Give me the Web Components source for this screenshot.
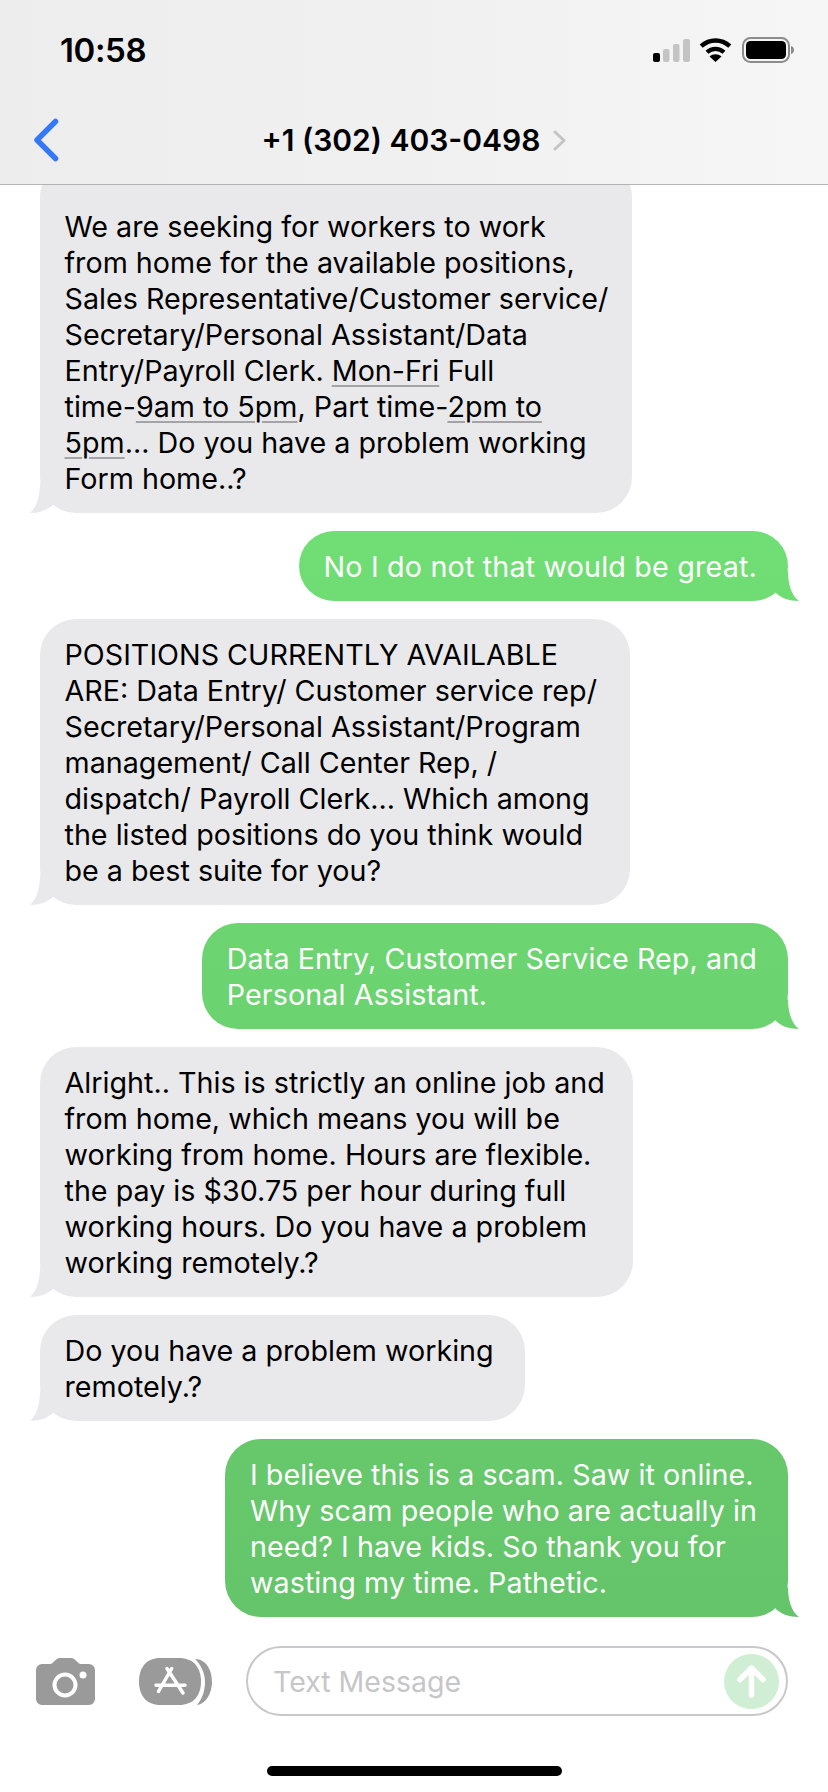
<!DOCTYPE html>
<html>
<head>
<meta charset="utf-8">
<title>Messages</title>
<style>
  html, body { margin: 0; padding: 0; background: #fff; }
  body { font-family: Inter, "Noto Sans", sans-serif; }
  .link { text-decoration: underline; text-decoration-color: #a3a3a8; text-decoration-thickness: 2px; text-underline-offset: 4px; }
</style>
</head>
<body>
<ios-screen>
  <ios-header slot="header" title="+1 (302) 403-0498" time="10:58"></ios-header>
  <msg-bubble from="them" style="--pt:48px;--pr:24px">We are seeking for workers to work<br>from home for the available positions,<br>Sales Representative/Customer service/<br>Secretary/Personal Assistant/Data<br>Entry/Payroll Clerk. <span class="link">Mon-Fri</span> Full<br>time-<span class="link">9am to 5pm</span>, Part time-<span class="link">2pm to</span><br><span class="link">5pm</span>... Do you have a problem working<br>Form home..?</msg-bubble>
  <msg-bubble from="me" style="letter-spacing:0.180px">No I do not that would be great.</msg-bubble>
  <msg-bubble from="them" style="--pr:33px">POSITIONS CURRENTLY AVAILABLE<br>ARE: Data Entry/ Customer service rep/<br>Secretary/Personal Assistant/Program<br>management/ Call Center Rep, /<br>dispatch/ Payroll Clerk... Which among<br>the listed positions do you think would<br>be a best suite for you?</msg-bubble>
  <msg-bubble from="me" style="letter-spacing:0.100px">Data Entry, Customer Service Rep, and<br>Personal Assistant.</msg-bubble>
  <msg-bubble from="them" style="--pr:28px">Alright.. This is strictly an online job and<br>from home, which means you will be<br>working from home. Hours are flexible.<br>the pay is $30.75 per hour during full<br>working hours. Do you have a problem<br>working remotely.?</msg-bubble>
  <msg-bubble from="them">Do you have a problem working<br>remotely.?</msg-bubble>
  <msg-bubble from="me" style="letter-spacing:0.060px">I believe this is a scam. Saw it online.<br>Why scam people who are actually in<br>need? I have kids. So thank you for<br>wasting my time. Pathetic.</msg-bubble>
  <compose-bar slot="footer" placeholder="Text Message"></compose-bar>
  <home-bar slot="footer"></home-bar>
</ios-screen>

<script>
class IosScreen extends HTMLElement {
  connectedCallback() {
    this.attachShadow({ mode: 'open' });
    this.shadowRoot.innerHTML = `
      <style>
        :host { display: flex; flex-direction: column; width: 828px; height: 1792px; overflow: hidden; background: #fff; }
        .list {
          flex: 1;
          min-height: 0;
          overflow: hidden;
          display: flex;
          flex-direction: column;
          justify-content: flex-end;
          gap: 18px;
          padding: 0 0 29px;
        }
      </style>
      <slot name="header"></slot>
      <div class="list"><slot></slot></div>
      <slot name="footer"></slot>
    `;
  }
}

class IosHeader extends HTMLElement {
  connectedCallback() {
    this.attachShadow({ mode: 'open' });
    this.shadowRoot.innerHTML = `
      <style>
        :host {
          display: block;
          height: 185px;
          box-sizing: border-box;
          background: linear-gradient(90deg, #ededee 0%, #f0f0f0 50%, #f6f6f6 100%);
          border-bottom: 1px solid #b4b4b6;
          color: #000;
        }
        .status { height: 100px; display: flex; align-items: center; justify-content: space-between; padding: 0 34px 0 60px; }
        .time { font-size: 33px; font-weight: 600; letter-spacing: -0.4px; }
        .icons { display: flex; align-items: center; }
        .icons svg { display: block; }
        .nav { height: 80px; display: grid; grid-template-columns: 1fr auto 1fr; align-items: center; }
        .back { padding-left: 33px; display: flex; }
        .title { display: flex; align-items: center; gap: 13px; font-size: 30px; font-weight: 600; letter-spacing: 0; }
      </style>
      <div class="status">
        <span class="time">${this.getAttribute('time')}</span>
        <div class="icons">
          <svg width="37" height="23" viewBox="0 0 37 23" style="margin-right:9px">
            <rect x="0" y="14" width="7" height="9" rx="2" fill="#000"/>
            <rect x="10" y="10" width="6.500" height="13" rx="2" fill="#c4c4c4"/>
            <rect x="20" y="5" width="6.500" height="18" rx="2" fill="#c4c4c4"/>
            <rect x="30" y="0" width="7" height="23" rx="2" fill="#c4c4c4"/>
          </svg>
          <svg width="33" height="24" viewBox="0 0 33 24" style="margin-right:10px">
            <path d="M2.200 8.200C10.500 0.500 22.500 0.500 30.800 8.200" fill="none" stroke="#000" stroke-width="4.400"/>
            <path d="M8 14.200C13 9.700 20 9.700 25 14.200" fill="none" stroke="#000" stroke-width="4.200"/>
            <path d="M16.500 24L10.500 18.400C14 15.600 19 15.600 22.500 18.400Z" fill="#000"/>
          </svg>
          <svg width="52" height="26" viewBox="0 0 52 26">
            <rect x="1" y="1" width="46" height="24" rx="7.500" fill="none" stroke="#8c8c8c" stroke-width="2"/>
            <rect x="4" y="4" width="40" height="18" rx="4.500" fill="#000"/>
            <path d="M49 9C51 9.500 52 11 52 13C52 15 51 16.500 49 17Z" fill="#8c8c8c"/>
          </svg>
        </div>
      </div>
      <div class="nav">
        <div class="back">
          <svg width="26" height="44" viewBox="0 0 26 44">
            <path d="M22.500 3.500L4 22L22.500 40.500" fill="none" stroke="#3478f6" stroke-width="5.500" stroke-linecap="round" stroke-linejoin="round"/>
          </svg>
        </div>
        <div class="title">
          <span>${this.getAttribute('title')}</span>
          <svg width="13" height="21" viewBox="0 0 13 21"><path d="M2 2L11 10.500L2 19" fill="none" stroke="#c4c4c6" stroke-width="3" stroke-linecap="round" stroke-linejoin="round"/></svg>
        </div>
        <div></div>
      </div>
    `;
  }
}

class MsgBubble extends HTMLElement {
  connectedCallback() {
    this.attachShadow({ mode: 'open' });
    this.shadowRoot.innerHTML = `
      <style>
        :host { display: flex; flex: none; font-size: 28.700px; line-height: 36px; white-space: nowrap; }
        :host([from="them"]) { justify-content: flex-start; padding-left: 40px; color: #000; --fill: #e9e9eb; }
        :host([from="me"]) { justify-content: flex-end; padding-right: 40px; color: #fff; --fill: linear-gradient(180deg, #75eb79 0, #63c068 1792px) fixed; }
        .b {
          position: relative;
          padding: var(--pt, 18px) var(--pr, 31px) 16px 24.500px;
          border-radius: 36px;
          background: var(--fill);
        }
        /* tail hangs off the bottom corner */
        .b::after {
          content: '';
          position: absolute;
          bottom: 0;
          width: 40px;
          height: 30px;
          background: var(--fill);
        }
        :host([from="me"]) .b::after { right: -11px; clip-path: path('M29 0C29 14 33 25 40 30C30 30 22 27 17 22L10 10Z'); }
        :host([from="them"]) .b::after { left: -10px; clip-path: path('M10 0C10 14 6 25 0 30C10 30 17 27 23 22L30 10Z'); }
      </style>
      <div class="b"><slot></slot></div>
    `;
  }
}

class ComposeBar extends HTMLElement {
  connectedCallback() {
    this.attachShadow({ mode: 'open' });
    this.shadowRoot.innerHTML = `
      <style>
        :host { display: flex; align-items: center; height: 70px; padding: 0 40px 0 36px; }
        svg { display: block; flex: none; }
        .field {
          flex: 1;
          height: 70px;
          box-sizing: border-box;
          display: flex;
          align-items: center;
          justify-content: space-between;
          margin-left: 34px;
          padding: 0 7px 0 25px;
          border: 2px solid #c8c8ca;
          border-radius: 35px;
          color: #c6c6c8;
          font-size: 28.500px;
        }
      </style>
      <svg width="59" height="47" viewBox="0 0 59 47">
        <path d="M6 6H14C18 6 19 0 24 0H35C40 0 41 6 45 6H53A6 6 0 0 1 59 12V41A6 6 0 0 1 53 47H6A6 6 0 0 1 0 41V12A6 6 0 0 1 6 6Z" fill="#9a9a9a"/>
        <circle cx="29" cy="27" r="10.500" fill="none" stroke="#fff" stroke-width="4"/>
        <circle cx="47" cy="17" r="3.500" fill="#fff"/>
      </svg>
      <svg width="73" height="47" viewBox="0 0 73 47" style="margin-left:44px">
        <path d="M56 1C67 1 73 12 73 24C73 35 67 46 58 47C63 41 66 33 66 24C66 15 62 7 56 1Z" fill="#9a9a9a"/>
        <path d="M21 0H40C54 0 62 9 62 23.500C62 38 54 47 40 47H21C8 47 0 38 0 23.500C0 9 8 0 21 0Z" fill="#9a9a9a"/>
        <path d="M32.700 10.500L19.500 33.500M28 10.500L44 35M17 27.300H46" fill="none" stroke="#fff" stroke-width="3.500" stroke-linecap="round"/>
      </svg>
      <div class="field">
        <span>${this.getAttribute('placeholder')}</span>
        <svg width="55" height="55" viewBox="0 0 55 55">
          <circle cx="27.500" cy="27.500" r="27.500" fill="#cfeed3"/>
          <path d="M27.500 41V14M16 25.500L27.500 14L39 25.500" fill="none" stroke="#fff" stroke-width="5.500" stroke-linecap="round" stroke-linejoin="round"/>
        </svg>
      </div>
    `;
  }
}

class HomeBar extends HTMLElement {
  connectedCallback() {
    this.attachShadow({ mode: 'open' });
    this.shadowRoot.innerHTML = `
      <style>
        :host { display: flex; justify-content: center; padding: 50px 0 16px 0; }
        div { width: 295px; height: 10px; border-radius: 5px; background: #000; }
      </style>
      <div></div>
    `;
  }
}

customElements.define('ios-screen', IosScreen);
customElements.define('ios-header', IosHeader);
customElements.define('msg-bubble', MsgBubble);
customElements.define('compose-bar', ComposeBar);
customElements.define('home-bar', HomeBar);
</script>
</body>
</html>
